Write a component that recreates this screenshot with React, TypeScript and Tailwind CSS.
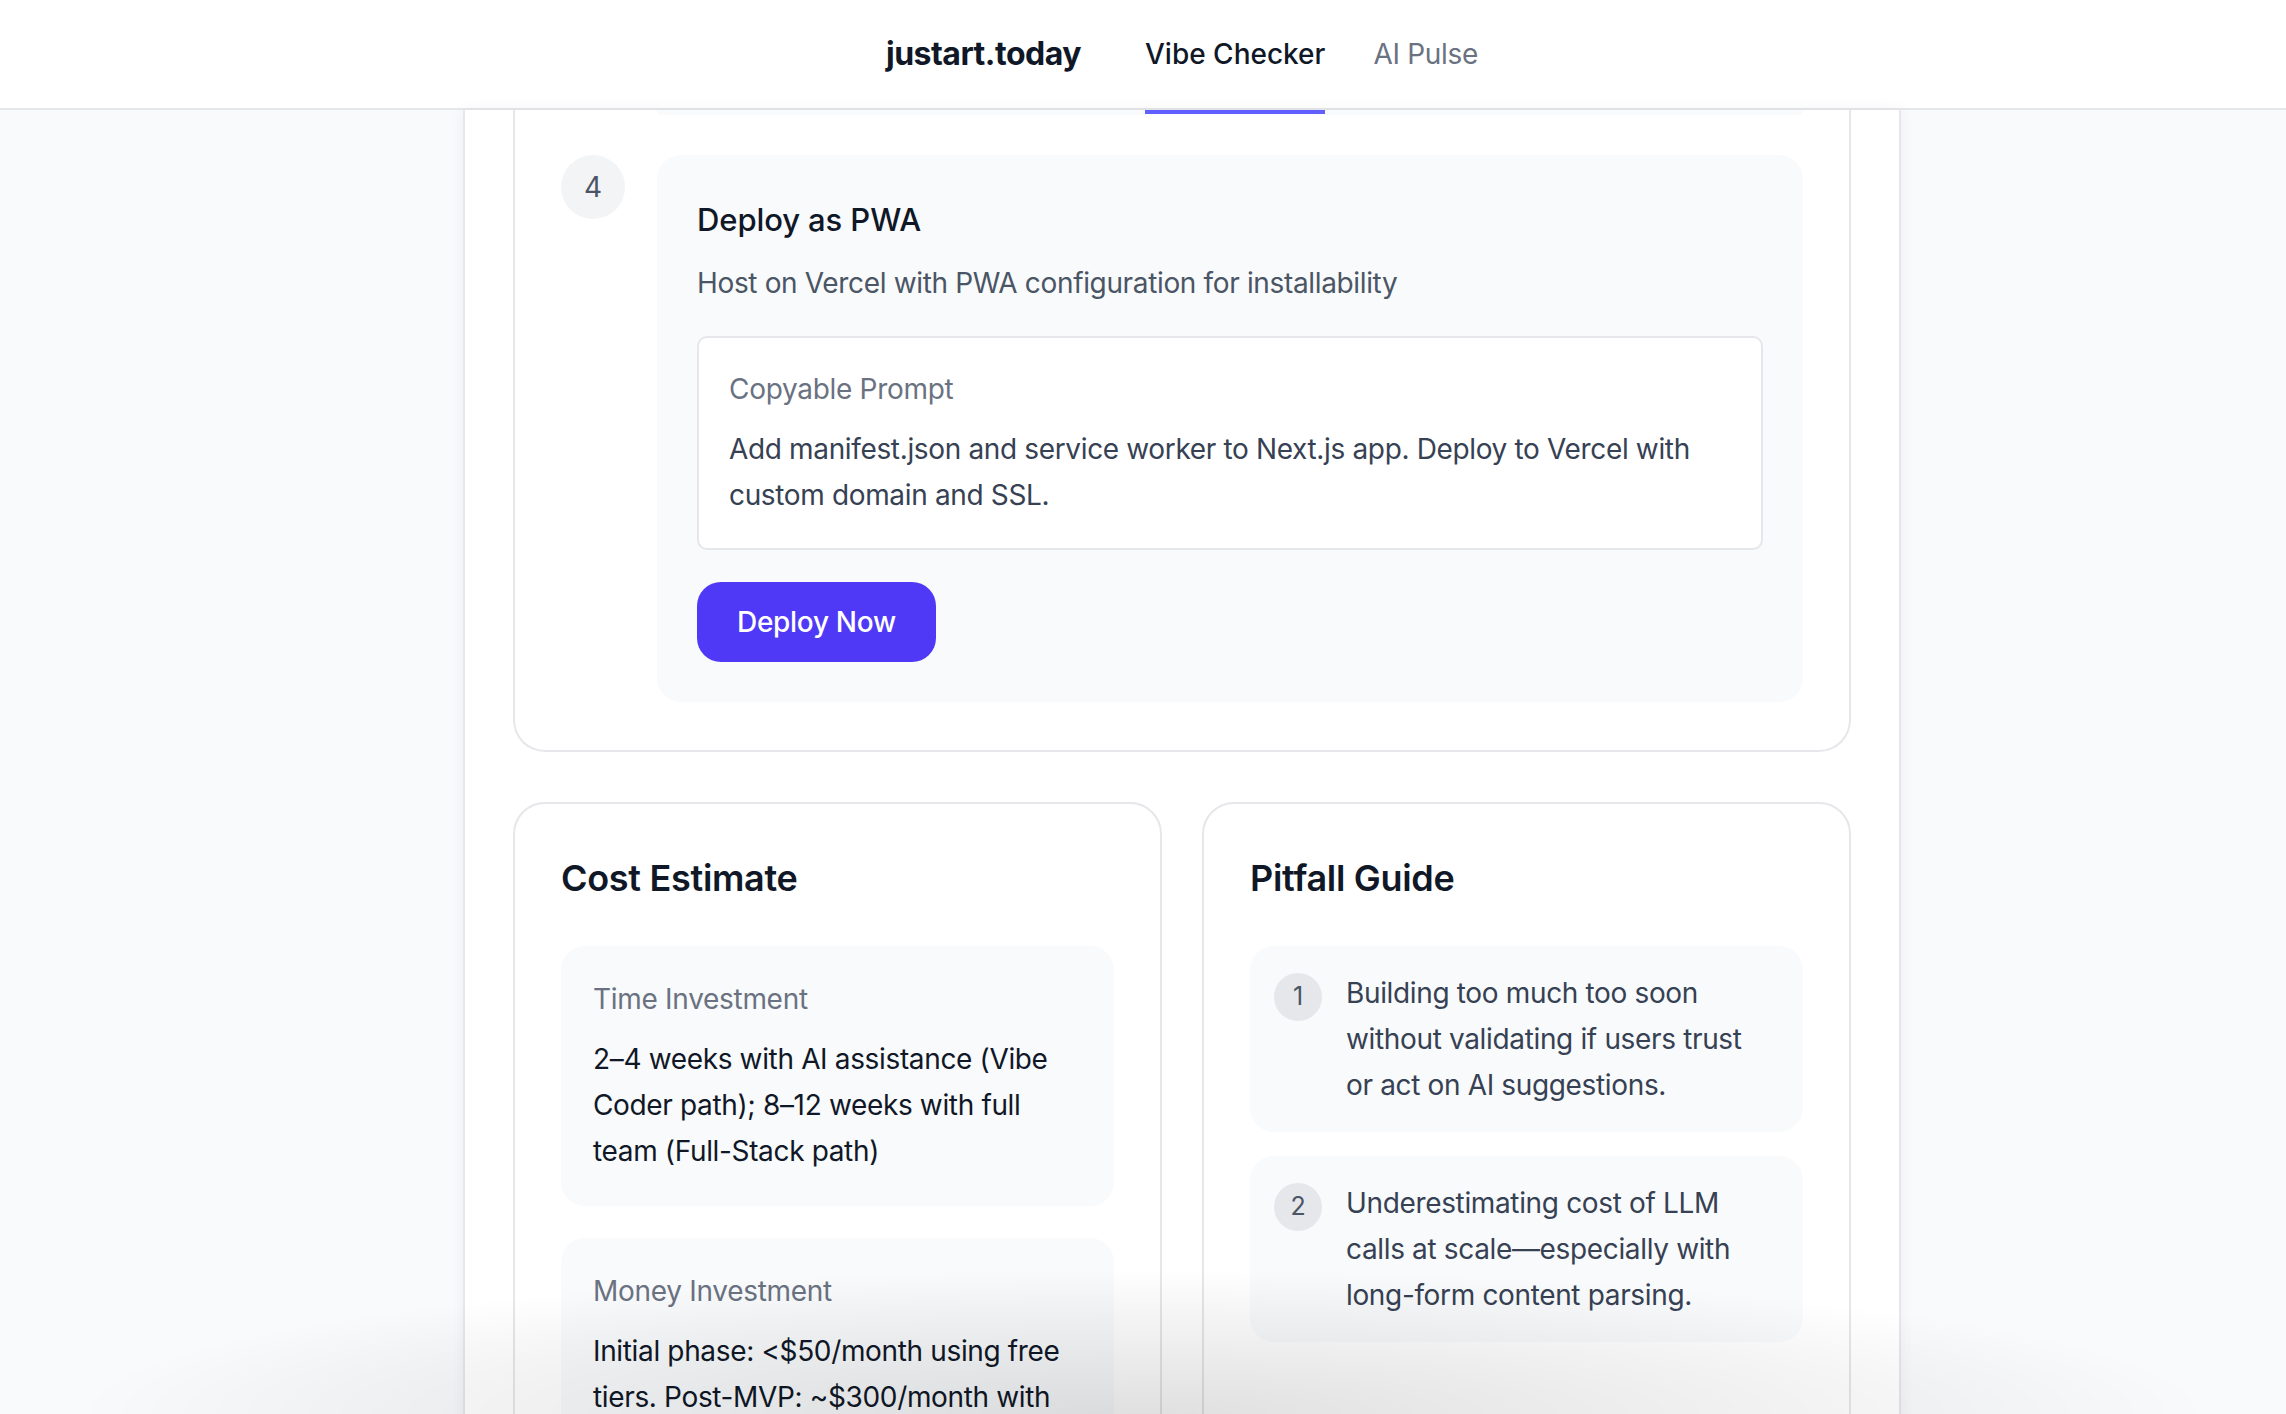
import React from "react";

const pitfalls = [
  "Building too much too soon without validating if users trust or act on AI suggestions.",
  "Underestimating cost of LLM calls at scale—especially with long-form content parsing.",
];

const costs = [
  {
    label: "Time Investment",
    value: "2–4 weeks with AI assistance (Vibe Coder path); 8–12 weeks with full team (Full-Stack path)",
  },
  {
    label: "Money Investment",
    value: "Initial phase: <$50/month using free tiers. Post-MVP: ~$300/month with scaled API usage and hosting.",
  },
];

function Header() {
  return (
    <header className="h-[110px] bg-white border-b-2 border-gray-200">
      <div className="ml-[463px] w-[1438px] h-full flex items-stretch justify-center">
        <div className="flex items-center text-[32px] font-bold text-gray-900 tracking-[-0.5px]">
          justart.today
        </div>
        <nav className="flex items-stretch ml-[64px] gap-[48px]">
          <a className="relative flex items-center text-[28px] font-medium text-gray-900">
            Vibe Checker
            <span className="absolute left-0 right-0 -bottom-[6px] h-[4px] bg-indigo-500" />
          </a>
          <a className="flex items-center text-[28px] text-gray-500 tracking-[-0.3px]">AI Pulse</a>
        </nav>
      </div>
    </header>
  );
}

function StepCard() {
  return (
    <div className="bg-white border-x-2 border-b-2 border-gray-200 rounded-b-[32px] px-[46px] pb-[48px]">
      {/* tail of the previous step */}
      <div className="pl-[96px]">
        <div className="h-[5px] bg-gray-50 rounded-b-[24px]" />
      </div>

      <div className="flex items-start gap-8 mt-[40px]">
        <div className="w-16 h-16 shrink-0 rounded-full bg-gray-100 flex items-center justify-center text-[28px] text-gray-600">
          4
        </div>
        <div className="flex-1 bg-gray-50 rounded-[24px] px-10 pt-[42px] pb-10">
          <h3 className="text-[31px] leading-[46px] font-medium text-gray-900 tracking-[-0.1px]">
            Deploy as PWA
          </h3>
          <p className="mt-[19px] text-[28px] leading-[42px] text-gray-600 tracking-[-0.35px]">
            Host on Vercel with PWA configuration for installability
          </p>
          <div className="mt-8 bg-white border-2 border-gray-200 rounded-[10px] p-[30px]">
            <div className="text-[28px] leading-[42px] text-gray-500 tracking-[-0.3px]">Copyable Prompt</div>
            <p className="mt-4 text-[28px] leading-[46px] text-gray-700 tracking-[-0.35px]">
              Add manifest.json and service worker to Next.js app. Deploy to Vercel with custom domain and SSL.
            </p>
          </div>
          <button className="mt-8 h-[80px] px-10 rounded-[24px] bg-indigo-600 text-white text-[28px] font-medium tracking-[-0.3px]">
            Deploy Now
          </button>
        </div>
      </div>
    </div>
  );
}

function CostEstimate() {
  return (
    <div className="bg-white border-2 border-gray-200 rounded-[32px] p-[46px]">
      <h2 className="text-[36px] leading-[56px] font-semibold text-gray-900 tracking-[-0.3px]">Cost Estimate</h2>
      <div className="mt-10 flex flex-col gap-8">
        {costs.map((c) => (
          <div key={c.label} className="bg-gray-50 rounded-[24px] p-8">
            <div className="text-[28px] leading-[42px] text-gray-500 tracking-[-0.3px]">{c.label}</div>
            <p className="mt-4 text-[28px] leading-[46px] text-gray-900 tracking-[-0.35px]">{c.value}</p>
          </div>
        ))}
      </div>
    </div>
  );
}

function PitfallGuide() {
  return (
    <div className="bg-white border-2 border-gray-200 rounded-[32px] p-[46px]">
      <h2 className="text-[36px] leading-[56px] font-semibold text-gray-900 tracking-[-0.3px]">Pitfall Guide</h2>
      <div className="mt-10 flex flex-col gap-6">
        {pitfalls.map((p, i) => (
          <div key={i} className="bg-gray-50 rounded-[24px] p-6 flex items-start gap-6">
            <div className="mt-[3px] w-12 h-12 shrink-0 rounded-full bg-gray-200 flex items-center justify-center text-[25px] text-gray-600">
              {i + 1}
            </div>
            <p className="pr-3 text-[28px] leading-[46px] text-gray-700 tracking-[-0.35px]">{p}</p>
          </div>
        ))}
      </div>
    </div>
  );
}

export default function App() {
  return (
    <div className="min-h-screen bg-gray-50 font-['Inter','Liberation_Sans',sans-serif]">
      <Header />
      <main className="ml-[463px] w-[1438px] min-h-[1304px] bg-white border-x-2 border-gray-200 shadow-[0_0_14px_rgba(0,0,0,0.05)] px-12 pb-20">
        <StepCard />
        <div className="mt-[50px] grid grid-cols-2 gap-[40px]">
          <CostEstimate />
          <PitfallGuide />
        </div>
      </main>
      <div className="fixed inset-x-0 bottom-0 h-[170px] pointer-events-none bg-[radial-gradient(ellipse_55%_100%_at_50%_100%,rgba(0,0,0,0.12),rgba(0,0,0,0.04)_60%,transparent_85%)]" />
    </div>
  );
}
